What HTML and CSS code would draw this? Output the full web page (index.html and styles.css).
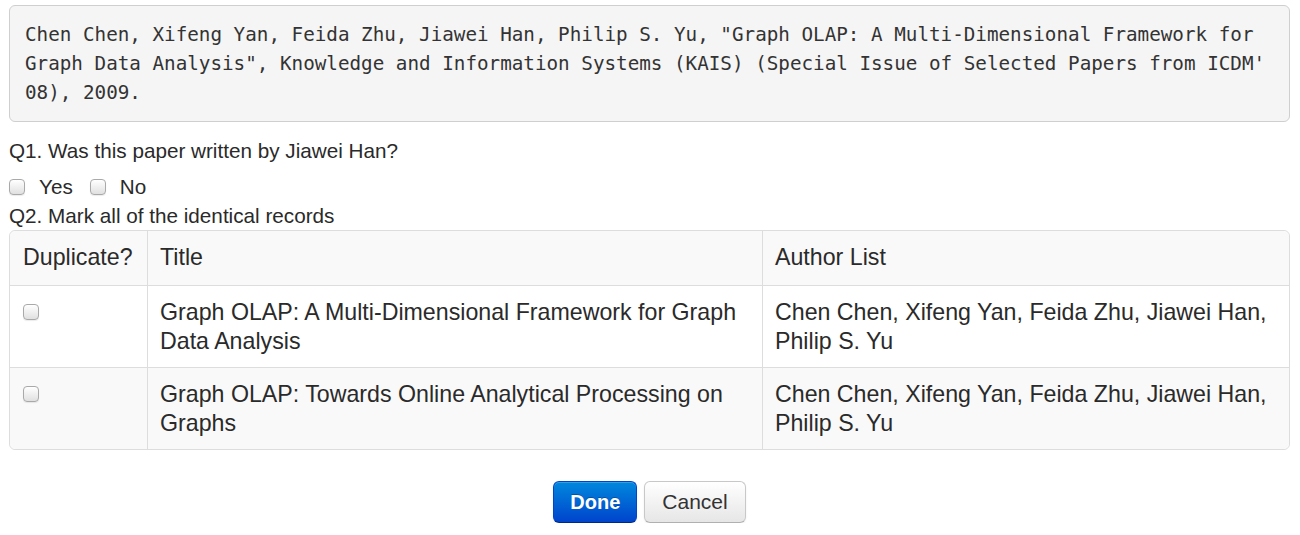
FILE: index.html
```html
<!DOCTYPE html>
<html>
<head>
<meta charset="utf-8">
<link rel="stylesheet" href="styles.css">
</head>
<body>
<div class="page">
  <pre class="citation">Chen Chen, Xifeng Yan, Feida Zhu, Jiawei Han, Philip S. Yu, "Graph OLAP: A Multi-Dimensional Framework for
Graph Data Analysis", Knowledge and Information Systems (KAIS) (Special Issue of Selected Papers from ICDM'
08), 2009.</pre>
  <div class="question">Q1. Was this paper written by Jiawei Han?</div>
  <div class="choices">
    <label class="choice"><input type="checkbox" class="cb"> Yes</label>
    <label class="choice"><input type="checkbox" class="cb"> No</label>
  </div>
  <div class="question">Q2. Mark all of the identical records</div>
  <table class="records">
    <tr class="head">
      <td class="c1">Duplicate?</td>
      <td class="c2">Title</td>
      <td class="c3">Author List</td>
    </tr>
    <tr class="odd">
      <td class="c1"><input type="checkbox" class="cb"></td>
      <td class="c2">Graph OLAP: A Multi-Dimensional Framework for Graph Data Analysis</td>
      <td class="c3">Chen Chen, Xifeng Yan, Feida Zhu, Jiawei Han, Philip S. Yu</td>
    </tr>
    <tr class="even">
      <td class="c1"><input type="checkbox" class="cb"></td>
      <td class="c2">Graph OLAP: Towards Online Analytical Processing on Graphs</td>
      <td class="c3">Chen Chen, Xifeng Yan, Feida Zhu, Jiawei Han, Philip S. Yu</td>
    </tr>
  </table>
  <div class="actions">
    <button class="btn btn-primary">Done</button>
    <button class="btn">Cancel</button>
  </div>
</div>
</body>
</html>
```
FILE: styles.css
```css
html, body {
  margin: 0;
  padding: 0;
  background: #fff;
}
.page {
  padding: 5px 10px 0 9px;
  font-family: "Liberation Sans", Arial, sans-serif;
  font-size: 20.7px;
  line-height: 29px;
  color: #2a2a2a;
}
.citation {
  margin: 0 0 14px 0;
  padding: 14px 15px;
  background: #f5f5f5;
  border: 1px solid #cfcfcf;
  border-radius: 6px;
  font-family: "DejaVu Sans Mono", "Liberation Mono", monospace;
  font-size: 19.25px;
  line-height: 29px;
  color: #333;
  white-space: pre-wrap;
}
.question {
  margin: 0;
}
.choices {
  display: flex;
  align-items: center;
  gap: 17px;
  height: 29px;
  margin-top: 7px;
}
.choice {
  display: flex;
  align-items: center;
  gap: 14px;
}
.cb {
  -webkit-appearance: none;
  appearance: none;
  margin: 0;
  width: 16px;
  height: 16px;
  border: 1px solid #a9a9a9;
  border-radius: 4px;
  background: linear-gradient(#ffffff, #e0e0e0);
  box-shadow: 0 1px 1px rgba(0,0,0,0.08);
  box-sizing: border-box;
}
.records {
  width: 100%;
  border-collapse: separate;
  border-spacing: 0;
  border: 1px solid #dddddd;
  border-radius: 6px;
  font-size: 23.2px;
  line-height: 29px;
}
.records td {
  padding: 12px 12px 11px 12px;
  vertical-align: top;
  border-left: 1px solid #dddddd;
  border-top: 1px solid #dddddd;
}
.records td:first-child {
  border-left: none;
  padding-left: 13px;
}
.records tr:first-child td {
  border-top: none;
}
.records .c1 { width: 112px; }
.records .c2 { width: 590px; }
.records .head td { background: #f9f9f9; padding-top: 12px; padding-bottom: 13px; }
.records .head td:first-child { border-top-left-radius: 6px; }
.records .head td:last-child { border-top-right-radius: 6px; }
.records .odd td { background: #ffffff; }
.records .even td { background: #f9f9f9; }
.records .even td:first-child { border-bottom-left-radius: 6px; }
.records .even td:last-child { border-bottom-right-radius: 6px; }
.records .c1 .cb { display: block; margin-top: 6px; margin-left: 0; }
.actions {
  display: flex;
  justify-content: center;
  gap: 7px;
  margin-top: 31px;
}
.btn {
  font-family: "Liberation Sans", Arial, sans-serif;
  font-size: 21px;
  height: 42px;
  padding: 0 17px;
  border-radius: 6px;
  border: 1px solid #c8c8c8;
  border-bottom-color: #b0b0b0;
  background: linear-gradient(#ffffff, #e6e6e6);
  color: #333;
  box-shadow: inset 0 1px 0 rgba(255,255,255,0.2), 0 1px 2px rgba(0,0,0,0.08);
}
.btn-primary {
  color: #fff;
  font-weight: bold;
  font-size: 20px;
  padding: 0 16px;
  border-color: #0044cc #0044cc #002a80;
  background: linear-gradient(#0088dd, #0044cc);
  text-shadow: 0 -1px 0 rgba(0,0,0,0.25);
}
```
